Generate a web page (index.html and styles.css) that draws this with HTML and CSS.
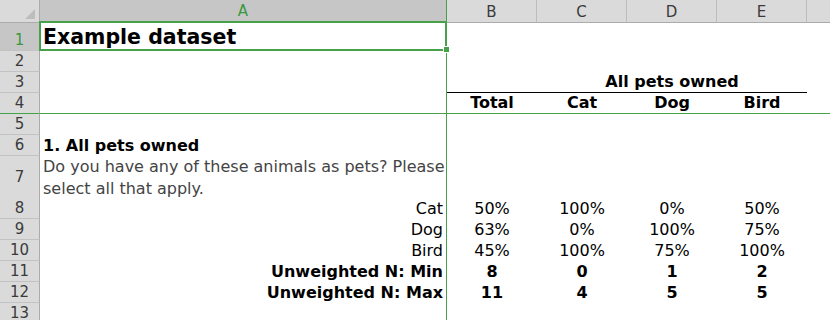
FILE: index.html
```html
<!DOCTYPE html>
<html>
<head>
<meta charset="utf-8">
<link rel="stylesheet" href="styles.css">
</head>
<body>
<div class="sheet">
  <div class="row hdr">
    <div class="corner"><svg width="40" height="22" viewBox="0 0 40 22"><polygon points="35,9 35,19 25,19" fill="#bdbdbd"/></svg></div>
    <div class="colh sel colA">A</div>
    <div class="colh">B</div>
    <div class="colh">C</div>
    <div class="colh">D</div>
    <div class="colh">E</div>
    <div class="colh last"></div>
  </div>

  <div class="row r1">
    <div class="rowh sel">1</div>
    <div class="c colA title">Example dataset</div>
    <div class="c"></div><div class="c"></div><div class="c"></div><div class="c"></div><div class="c"></div>
  </div>

  <div class="row">
    <div class="rowh">2</div>
    <div class="c colA"></div>
    <div class="c"></div><div class="c"></div><div class="c"></div><div class="c"></div><div class="c"></div>
  </div>

  <div class="row">
    <div class="rowh">3</div>
    <div class="c colA"></div>
    <div class="c under"></div>
    <div class="c under b mid span3">All pets owned</div>
    <div class="c"></div>
  </div>

  <div class="row freeze">
    <div class="rowh">4</div>
    <div class="c colA"></div>
    <div class="c b mid">Total</div>
    <div class="c b mid">Cat</div>
    <div class="c b mid">Dog</div>
    <div class="c b mid">Bird</div>
    <div class="c"></div>
  </div>

  <div class="row">
    <div class="rowh">5</div>
    <div class="c colA"></div>
    <div class="c"></div><div class="c"></div><div class="c"></div><div class="c"></div><div class="c"></div>
  </div>

  <div class="row">
    <div class="rowh">6</div>
    <div class="c colA b">1. All pets owned</div>
    <div class="c"></div><div class="c"></div><div class="c"></div><div class="c"></div><div class="c"></div>
  </div>

  <div class="row r7">
    <div class="rowh">7</div>
    <div class="c colA question">Do you have any of these animals as pets? Please<br>select all that apply.</div>
    <div class="c"></div><div class="c"></div><div class="c"></div><div class="c"></div><div class="c"></div>
  </div>

  <div class="row">
    <div class="rowh">8</div>
    <div class="c colA right">Cat</div>
    <div class="c mid">50%</div>
    <div class="c mid">100%</div>
    <div class="c mid">0%</div>
    <div class="c mid">50%</div>
    <div class="c"></div>
  </div>

  <div class="row">
    <div class="rowh">9</div>
    <div class="c colA right">Dog</div>
    <div class="c mid">63%</div>
    <div class="c mid">0%</div>
    <div class="c mid">100%</div>
    <div class="c mid">75%</div>
    <div class="c"></div>
  </div>

  <div class="row">
    <div class="rowh">10</div>
    <div class="c colA right">Bird</div>
    <div class="c mid">45%</div>
    <div class="c mid">100%</div>
    <div class="c mid">75%</div>
    <div class="c mid">100%</div>
    <div class="c"></div>
  </div>

  <div class="row">
    <div class="rowh">11</div>
    <div class="c colA right b">Unweighted N: Min</div>
    <div class="c mid b">8</div>
    <div class="c mid b">0</div>
    <div class="c mid b">1</div>
    <div class="c mid b">2</div>
    <div class="c"></div>
  </div>

  <div class="row">
    <div class="rowh">12</div>
    <div class="c colA right b">Unweighted N: Max</div>
    <div class="c mid b">11</div>
    <div class="c mid b">4</div>
    <div class="c mid b">5</div>
    <div class="c mid b">5</div>
    <div class="c"></div>
  </div>

  <div class="row">
    <div class="rowh">13</div>
    <div class="c colA"></div>
    <div class="c"></div><div class="c"></div><div class="c"></div><div class="c"></div><div class="c"></div>
  </div>

  <div class="selection"></div>
  <div class="handle"></div>
</div>
</body>
</html>
```

FILE: styles.css
```css
* { box-sizing: border-box; }

html, body {
  margin: 0;
  padding: 0;
  background: #ffffff;
}

body {
  width: 830px;
  height: 320px;
  overflow: hidden;
  font-family: "DejaVu Sans", "Noto Sans", sans-serif;
  color: #000;
}

.sheet {
  position: relative;
  width: 830px;
}

.row {
  display: grid;
  grid-template-columns: 40px 407px 90px 90px 90px 90px 1fr;
  height: 21px;
}

.row.hdr { height: 23px; }
.row.r1 { height: 28px; }
.row.r7 { height: 42px; }

/* header row */
.corner {
  background: #dadada;
  border-bottom: 1px solid #ababab;
  border-right: 1px solid #ababab;
  height: 23px;
}
.corner svg { display: block; }

.colh {
  background: #dadada;
  border-bottom: 1px solid #ababab;
  border-right: 1px solid #bcbcbc;
  font-size: 15px;
  color: #3a3a3a;
  display: flex;
  align-items: flex-end;
  justify-content: center;
  line-height: 18px;
  padding-bottom: 1px;
}
.colh.last { border-right: none; }
.colh.sel {
  background: #c6c6c6;
  color: #3b983f;
  border-bottom: 2px solid #45a249;
}
.colh.colA { border-right: 1px solid #45a249; }

/* row header */
.rowh {
  background: #dadada;
  border-right: 1px solid #ababab;
  border-bottom: 1px solid #c2c2c2;
  font-size: 15px;
  color: #3a3a3a;
  display: flex;
  align-items: flex-end;
  justify-content: center;
  line-height: 18px;
  padding-bottom: 1px;
}
.rowh.sel {
  background: #c6c6c6;
  color: #3b983f;
}
.r7 .rowh { align-items: center; padding-bottom: 0; }

/* body cells */
.c {
  font-size: 16px;
  display: flex;
  align-items: flex-end;
  padding: 0 3px;
  white-space: nowrap;
  line-height: 18.6px;
  min-width: 0;
}
.c.colA { border-right: 1px solid #45a249; }
.freeze > div { border-bottom: 1px solid #45a249; }

.b { font-weight: bold; }
.mid { justify-content: center; }
.right { justify-content: flex-end; }
.span3 { grid-column: span 3; }
.under { border-bottom: 1px solid #000; }

.title {
  font-size: 20.5px;
  font-weight: bold;
  line-height: 24px;
  padding-bottom: 2px;
}

.question {
  color: #444;
  line-height: 21.6px;
  display: block;
  padding-top: 0;
  align-self: end;
}

/* selection overlay */
.selection {
  position: absolute;
  left: 39px;
  top: 21px;
  width: 408px;
  height: 30px;
  border: 2px solid #45a249;
}
.handle {
  position: absolute;
  left: 443px;
  top: 46px;
  width: 7px;
  height: 7px;
  background: #45a249;
  border: 1px solid #fff;
}
```
